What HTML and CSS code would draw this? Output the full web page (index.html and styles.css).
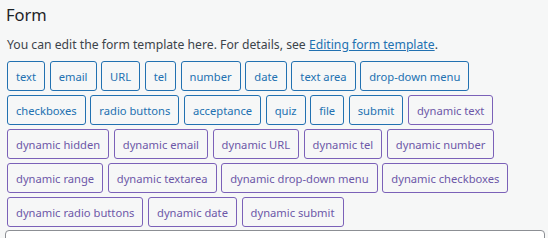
FILE: index.html
```html
<!DOCTYPE html>
<html>
<head><title>Form</title>
<link rel="stylesheet" href="styles.css">
</head>
<body>
<div class="panel">
  <h2>Form</h2>
  <p class="desc">You can edit the form template here. For details, see <a href="#">Editing form template</a>.</p>
  <div class="tag-list">
    <button class="tag">text</button>
    <button class="tag">email</button>
    <button class="tag">URL</button>
    <button class="tag">tel</button>
    <button class="tag">number</button>
    <button class="tag">date</button>
    <button class="tag">text area</button>
    <button class="tag">drop-down menu</button>
    <button class="tag">checkboxes</button>
    <button class="tag">radio buttons</button>
    <button class="tag">acceptance</button>
    <button class="tag">quiz</button>
    <button class="tag">file</button>
    <button class="tag">submit</button>
    <button class="tag dyn">dynamic text</button>
    <button class="tag dyn">dynamic hidden</button>
    <button class="tag dyn">dynamic email</button>
    <button class="tag dyn">dynamic URL</button>
    <button class="tag dyn">dynamic tel</button>
    <button class="tag dyn">dynamic number</button>
    <button class="tag dyn">dynamic range</button>
    <button class="tag dyn">dynamic textarea</button>
    <button class="tag dyn">dynamic drop-down menu</button>
    <button class="tag dyn">dynamic checkboxes</button>
    <button class="tag dyn">dynamic radio buttons</button>
    <button class="tag dyn">dynamic date</button>
    <button class="tag dyn">dynamic submit</button>
  </div>
  <textarea class="template" rows="6"></textarea>
</div>
</body>
</html>
```

FILE: styles.css
```css
body {
  margin: 0;
  background-color: #f6f7f7;
  color: #3c434a;
  font-family: "Noto Sans", sans-serif;
  font-size: 12.2px;
}

.panel {
  padding: 3px 9px 0 7px;
}

h2 {
  margin: 0 0 0 -1px;
  font-size: 16.5px;
  font-weight: 400;
  line-height: 24px;
  color: #1d2327;
}

.desc {
  margin: 9px 0 7px 0;
  line-height: 18px;
}

.desc a {
  color: #2271b1;
}

.tag-list {
  display: flex;
  flex-wrap: wrap;
  gap: 4px 4.6px;
}

.tag {
  height: 30px;
  padding: 0 8px;
  border: 1px solid #2271b1;
  border-radius: 3px;
  background-color: #f6f7f7;
  color: #2271b1;
  font-family: inherit;
  font-size: 11.2px;
}

.tag.dyn {
  border-color: #7b61b8;
  color: #6d58a8;
}

.template {
  display: block;
  margin: 3px 0 0 -2px;
  width: 534px;
  height: 120px;
  border: 1px solid #8c8f94;
  border-radius: 4px;
  background: #fff;
}
```
